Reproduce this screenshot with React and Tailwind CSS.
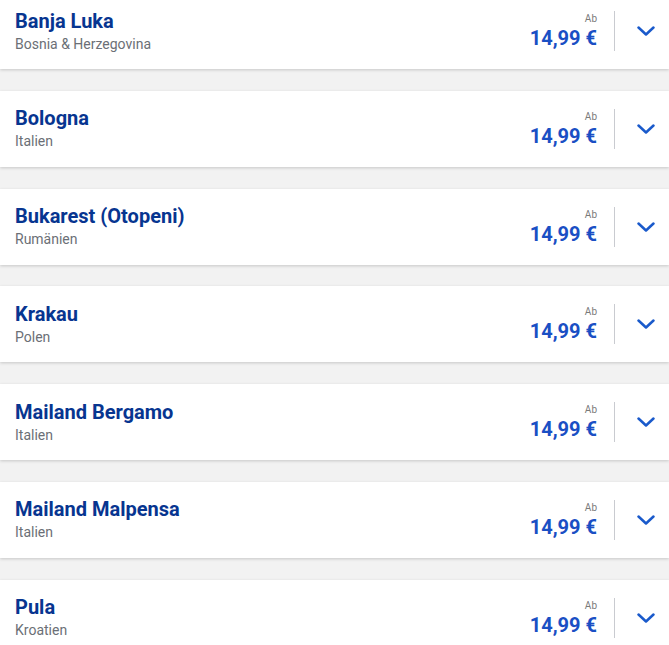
import React from "react";

const items = [
  ["Banja Luka", "Bosnia & Herzegovina"],
  ["Bologna", "Italien"],
  ["Bukarest (Otopeni)", "Rumänien"],
  ["Krakau", "Polen"],
  ["Mailand Bergamo", "Italien"],
  ["Mailand Malpensa", "Italien"],
  ["Pula", "Kroatien"],
];

function Chevron() {
  return (
    <svg width="18" height="10" viewBox="0 0 18 10" fill="none">
      <path d="M1.5 1.5 L9 8.5 L16.5 1.5" stroke="#1a5acb" strokeWidth="2.5" strokeLinecap="round" strokeLinejoin="round" />
    </svg>
  );
}

export default function App() {
  return (
    <div className="h-[645px] w-[669px] overflow-hidden bg-[#f2f2f2]" style={{ fontFamily: "Roboto, 'Noto Sans', Arial, sans-serif" }}>
      <div className="-mt-[7px] flex flex-col gap-[21.8px]">
        {items.map(([city, country]) => (
          <div key={city} className="flex h-[76px] items-center bg-white pl-[15px] pr-[14px] shadow-[0_1px_3px_rgba(0,0,0,0.18)]">
            <div className="flex flex-1 flex-col">
              <div className="text-[20px] font-bold leading-[23px] text-[#073590]">{city}</div>
              <div className="mt-[2px] text-[14px] leading-[18px] text-[#6b6f76]">{country}</div>
            </div>
            <div className="flex flex-col items-end pt-[1px]">
              <div className="text-[10px] leading-[12px] text-[#7a7a7a]">Ab</div>
              <div className="mt-[1px] text-[20px] font-bold leading-[24px] text-[#1a4fc4]">14,99 €</div>
            </div>
            <div className="ml-[17px] h-[40px] w-px bg-[#c9cbd0]" />
            <div className="ml-[22px] flex items-center">
              <Chevron />
            </div>
          </div>
        ))}
      </div>
    </div>
  );
}
